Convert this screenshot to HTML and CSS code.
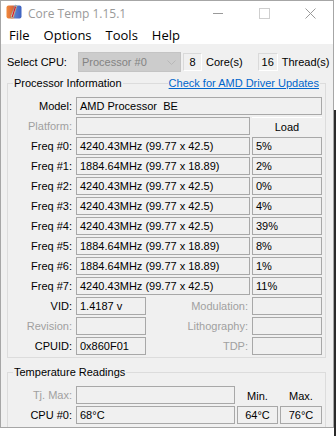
FILE: index.html
```html
<!DOCTYPE html>
<html lang="en">
<head>
    <meta charset="UTF-8">
    <meta name="viewport" content="width=device-width, initial-scale=1.0">
    <title>Core Temp 1.15.1</title>
    <link rel="stylesheet" href="styles.css">
</head>
<body>
<div class="screen">
    <div class="window">
        <div class="titlebar">
            <svg class="app-icon" width="16" height="16" viewBox="0 0 16 16">
                <defs>
                    <linearGradient id="tile" x1="0" y1="0" x2="1" y2="0">
                        <stop offset="0" stop-color="#f08a3c"/>
                        <stop offset="0.45" stop-color="#d8653a"/>
                        <stop offset="0.55" stop-color="#5b7fd0"/>
                        <stop offset="1" stop-color="#3d62c0"/>
                    </linearGradient>
                </defs>
                <rect x="0.5" y="1.5" width="15" height="13" rx="2" fill="url(#tile)"/>
                <path d="M9.5 1 L11 2 L7.5 13.5 L5.2 14 L5 11.5 Z" fill="#e8ece6" stroke="#8a9a84" stroke-width="0.7"/>
                <path d="M9.6 2.5 L6.2 13" stroke="#d4202a" stroke-width="1.3"/>
            </svg>
            <span class="title">Core Temp 1.15.1</span>
            <div class="controls">
                <span class="ctl"><span class="ctl-min"></span></span>
                <span class="ctl"><span class="ctl-max"></span></span>
                <span class="ctl">
                    <svg width="11" height="11" viewBox="0 0 11 11"><path d="M0.5 0.5 L10.5 10.5 M10.5 0.5 L0.5 10.5" stroke="#9a9a9a" stroke-width="1"/></svg>
                </span>
            </div>
        </div>

        <div class="menubar">
            <span class="menu-item">File</span>
            <span class="menu-item">Options</span>
            <span class="menu-item">Tools</span>
            <span class="menu-item">Help</span>
        </div>

        <div class="content">
            <div class="cpu-row">
                <span class="cpu-label">Select CPU:</span>
                <div class="combo">
                    <span>Processor #0</span>
                    <svg class="combo-arrow" width="9" height="5" viewBox="0 0 9 5"><path d="M0.5 0.5 L4.5 4.5 L8.5 0.5" fill="none" stroke="#b8b8b8" stroke-width="1"/></svg>
                </div>
                <span class="count">8</span>
                <span class="count-label">Core(s)</span>
                <span class="count count-threads">16</span>
                <span class="count-label">Thread(s)</span>
            </div>

            <div class="group group-info">
                <span class="group-title">Processor Information</span>
                <a class="driver-link" href="#">Check for AMD Driver Updates</a>

                <div class="row">
                    <span class="lbl">Model:</span>
                    <div class="field f-wide">AMD Processor&nbsp; BE</div>
                </div>
                <div class="row">
                    <span class="lbl off">Platform:</span>
                    <div class="field f-main"></div>
                    <div class="load-head">Load</div>
                </div>
                <div class="row">
                    <span class="lbl">Freq #0:</span>
                    <div class="field f-main">4240.43MHz (99.77 x 42.5)</div>
                    <div class="field f-load">5%</div>
                </div>
                <div class="row">
                    <span class="lbl">Freq #1:</span>
                    <div class="field f-main">1884.64MHz (99.77 x 18.89)</div>
                    <div class="field f-load">2%</div>
                </div>
                <div class="row">
                    <span class="lbl">Freq #2:</span>
                    <div class="field f-main">4240.43MHz (99.77 x 42.5)</div>
                    <div class="field f-load">0%</div>
                </div>
                <div class="row">
                    <span class="lbl">Freq #3:</span>
                    <div class="field f-main">4240.43MHz (99.77 x 42.5)</div>
                    <div class="field f-load">4%</div>
                </div>
                <div class="row">
                    <span class="lbl">Freq #4:</span>
                    <div class="field f-main">4240.43MHz (99.77 x 42.5)</div>
                    <div class="field f-load">39%</div>
                </div>
                <div class="row">
                    <span class="lbl">Freq #5:</span>
                    <div class="field f-main">1884.64MHz (99.77 x 18.89)</div>
                    <div class="field f-load">8%</div>
                </div>
                <div class="row">
                    <span class="lbl">Freq #6:</span>
                    <div class="field f-main">1884.64MHz (99.77 x 18.89)</div>
                    <div class="field f-load">1%</div>
                </div>
                <div class="row">
                    <span class="lbl">Freq #7:</span>
                    <div class="field f-main">4240.43MHz (99.77 x 42.5)</div>
                    <div class="field f-load">11%</div>
                </div>
                <div class="row">
                    <span class="lbl">VID:</span>
                    <div class="field f-short">1.4187 v</div>
                    <span class="lbl lbl-mid off">Modulation:</span>
                    <div class="field f-short"></div>
                </div>
                <div class="row">
                    <span class="lbl off">Revision:</span>
                    <div class="field f-short"></div>
                    <span class="lbl lbl-mid off">Lithography:</span>
                    <div class="field f-short"></div>
                </div>
                <div class="row">
                    <span class="lbl">CPUID:</span>
                    <div class="field f-short">0x860F01</div>
                    <span class="lbl lbl-mid off">TDP:</span>
                    <div class="field f-short"></div>
                </div>
            </div>

            <div class="group group-temp">
                <span class="group-title">Temperature Readings</span>
                <div class="row">
                    <span class="lbl off">Tj. Max:</span>
                    <div class="field f-temp"></div>
                    <div class="temp-head t-min">Min.</div>
                    <div class="temp-head t-max">Max.</div>
                </div>
                <div class="row">
                    <span class="lbl">CPU #0:</span>
                    <div class="field f-temp">68°C</div>
                    <div class="field t-min centered">64°C</div>
                    <div class="field t-max centered">76°C</div>
                </div>
            </div>
        </div>
    </div>
    <div class="side-strip"></div>
</div>
<div class="below">Stay connected</div>
</body>
</html>
```

FILE: styles.css
```css
html, body {
    margin: 0;
    height: 436px;
    overflow: hidden;
}

body {
    background: #fff;
    font-family: "Liberation Sans", Arial, sans-serif;
    font-size: 11px;
    color: #000;
}

.screen {
    display: flex;
    align-items: flex-start;
}

.window {
    width: 334px;
    height: 428px;
    box-sizing: border-box;
    border: 1px solid #a6a6a6;
    background: #f0f0f0;
    display: flex;
    flex-direction: column;
    overflow: hidden;
    flex-shrink: 0;
}

.side-strip {
    width: 2px;
    height: 326px;
    margin-top: 110px;
    background: #2a2a2a;
}

/* title bar */
.titlebar {
    height: 25px;
    background: #fff;
    display: flex;
    align-items: center;
    padding-left: 5px;
}

.app-icon {
    align-self: flex-start;
    margin-top: 3px;
}

.title {
    margin-left: 6px;
    font-family: "Open Sans", sans-serif;
    font-size: 12px;
    color: #9a9a9a;
}

.controls {
    margin-left: auto;
    display: flex;
    height: 25px;
}

.ctl {
    width: 46px;
    display: flex;
    align-items: center;
    justify-content: center;
}

.ctl-min {
    width: 10px;
    height: 1px;
    background: #9a9a9a;
}

.ctl-max {
    width: 9px;
    height: 9px;
    border: 1px solid #cfcfcf;
}

/* menu */
.menubar {
    height: 21px;
    background: #fff;
    display: flex;
    align-items: center;
    padding-left: 1px;
    font-family: "Open Sans", sans-serif;
    font-size: 13px;
}

.menu-item {
    padding: 0 7px;
}

/* body */
.content {
    padding: 8px 0 0 6px;
}

.cpu-row {
    display: flex;
    align-items: center;
    height: 20px;
}

.cpu-label {
    width: 71px;
}

.combo {
    width: 103px;
    height: 20px;
    box-sizing: border-box;
    background: #cccccc;
    border: 1px solid #c4c4c4;
    color: #838383;
    display: flex;
    align-items: center;
    padding-left: 3px;
}

.combo-arrow {
    margin-left: auto;
    margin-right: 4px;
}

.count {
    width: 19px;
    height: 18px;
    box-sizing: border-box;
    border: 1px solid #dadada;
    border-right-color: #fff;
    border-bottom-color: #fff;
    margin-left: 2px;
    text-align: center;
    line-height: 16px;
}

.count-threads {
    width: 20px;
    margin-left: 15px;
}

.count-label {
    margin-left: 4px;
}

/* group boxes */
.group {
    position: relative;
    width: 319px;
    box-sizing: border-box;
    border: 1px solid #dcdcdc;
    padding: 13px 3px 2px 0;
}

.group-info {
    margin-top: 11px;
}

.group-temp {
    margin-top: 14px;
    padding-bottom: 6px;
}

.group-title {
    position: absolute;
    top: -8px;
    left: 5px;
    padding: 0 1px;
    background: #f0f0f0;
    line-height: 14px;
}

.driver-link {
    position: absolute;
    top: -8px;
    right: 5px;
    padding: 0 1px;
    background: #f0f0f0;
    line-height: 14px;
    color: #0066cc;
}

.row {
    display: flex;
    height: 18px;
    margin-bottom: 2px;
}

.row:last-child {
    margin-bottom: 0;
}

.lbl {
    width: 64px;
    margin-right: 4px;
    text-align: right;
    line-height: 18px;
    white-space: nowrap;
}

.lbl-mid {
    width: 102px;
}

.off {
    color: #a0a0a0;
}

.field {
    height: 18px;
    box-sizing: border-box;
    border: 1px solid #a8a8a8;
    padding-left: 3px;
    line-height: 16px;
    white-space: nowrap;
    overflow: hidden;
}

.f-wide {
    width: 246px;
}

.f-main {
    width: 174px;
}

.f-load {
    width: 70px;
    margin-left: 2px;
}

.f-short {
    width: 70px;
}

.load-head {
    width: 70px;
    margin-left: 2px;
    box-sizing: border-box;
    border-top: 1px solid #fff;
    text-align: center;
    line-height: 18px;
}

.f-temp {
    width: 159px;
}

.t-min {
    width: 41px;
    margin-left: 2px;
}

.t-max {
    width: 42px;
    margin-left: 2px;
}

.temp-head {
    text-align: center;
    line-height: 20px;
}

.centered {
    text-align: center;
    padding-left: 0;
}

.below {
    margin: 2px 0 0 146px;
    font-size: 22px;
    font-weight: bold;
    color: #1a1a1a;
    line-height: 24px;
}
```
